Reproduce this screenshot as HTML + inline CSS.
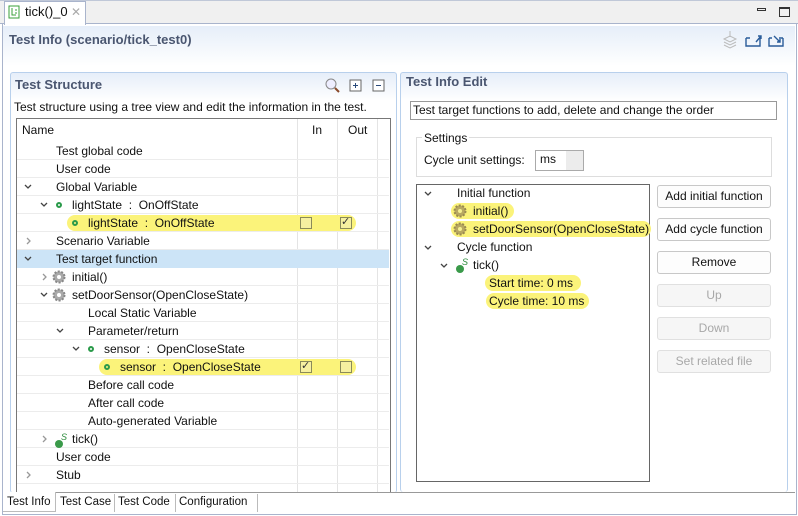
<!DOCTYPE html>
<html><head><meta charset="utf-8"><style>
*{margin:0;padding:0;box-sizing:border-box}
body{width:798px;height:516px;overflow:hidden;background:#fff;font-family:"Liberation Sans",sans-serif;font-size:12px;color:#111;position:relative}
.a{position:absolute}
.t{position:absolute;white-space:nowrap;line-height:18px}
.row{position:absolute;left:17px;width:372px;height:18px;border-bottom:1px solid #ececec}
.hl{position:absolute;background:#fbf37a;border-radius:9px;height:16px}
.cb{position:absolute;width:12px;height:12px;border:1px solid #8a8a5a;background:#f6f0a0}
.btn{position:absolute;left:657px;width:114px;height:23px;border:1px solid #c8c8c8;border-radius:3px;background:#fdfdfd;text-align:center;line-height:21px}
.dis{color:#a8a8a8;background:#f6f6f6;border-color:#e0e0e0}
.gear{position:absolute;width:14px;height:14px}
.dot{position:absolute;width:6px;height:6px;border:2px solid #2a9a4a;border-radius:50%}
</style></head><body>
<div class="a" style="left:0;top:0;width:798px;height:24px;background:#f0f0f0;border-bottom:1px solid #a9b4cc;border-top:1px solid #c0c8d8"></div>
<div class="a" style="left:4px;top:1px;width:82px;height:24px;background:#fff;border:1px solid #a9b4cc;border-bottom:none"></div>
<svg class="a" style="left:8px;top:5px" width="12" height="14"><rect x="1" y="1" width="10" height="12" fill="none" stroke="#3aa03a"/><path d="M4 3v7h4M7 5h2M7 8h2" stroke="#3aa03a" fill="none"/></svg>
<div class="t" style="left:25px;top:3px;font-size:13px">tick()_0</div>
<div class="t" style="left:71px;top:3px;color:#aaa;font-size:12px">✕</div>
<div class="a" style="left:757px;top:8px;width:9px;height:3px;border:1px solid #333"></div>
<div class="a" style="left:779px;top:7px;width:11px;height:10px;border:1px solid #333;border-top-width:2px"></div>
<div class="a" style="left:2px;top:24px;width:795px;height:491px;border:1px solid #a9b4cc;border-top:none"></div>
<div class="a" style="left:3px;top:26px;width:792px;height:40px;background:linear-gradient(#e6eef9,#fff)"></div>
<div class="t" style="left:9px;top:31px;font-size:13px;font-weight:bold;color:#4a5670">Test Info (scenario/tick_test0)</div>
<svg class="a" style="left:722px;top:30px" width="70" height="20"><g stroke="#bbb" fill="none"><path d="M2 9l6-3 6 3-6 3z M2 12l6 3 6-3 M2 15l6 3 6-3 M8 1v6"/></g><g stroke="#2a5c9a" fill="none" stroke-width="1.4"><path d="M24 8v8h14v-8M28 8h-4M34 12l5-6M36 6h3v3"/><path d="M47 8v8h14v-8M47 8h3M52 6l6 6M58 9v3h-3M57 8h4"/></g></svg>
<div class="a" style="left:10px;top:72px;width:387px;height:421px;border:1px solid #b8d0ec;border-radius:3px;border-bottom:none;background:linear-gradient(#e6eef9,#fff 28px)"></div>
<div class="t" style="left:15px;top:76px;font-size:13px;font-weight:bold;color:#4a5670">Test Structure</div>
<svg class="a" style="left:324px;top:77px" width="66" height="18"><circle cx="7" cy="7" r="5" fill="#eef" stroke="#888"/><path d="M11 11l4 4" stroke="#8a4a2a" stroke-width="2"/><rect x="26" y="3" width="11" height="11" fill="#fff" stroke="#666"/><path d="M29 8.5h5M31.5 6v5" stroke="#2a4a7a"/><rect x="49" y="3" width="11" height="11" fill="#fff" stroke="#666"/><path d="M52 8.5h5" stroke="#2a4a7a"/></svg>
<div class="t" style="left:14px;top:98px">Test structure using a tree view and edit the information in the test.</div>
<div class="a" style="left:16px;top:118px;width:375px;height:375px;border:1px solid #777;background:#fff"></div>
<div class="a" style="left:297px;top:119px;width:1px;height:373px;background:#e4e4e4"></div>
<div class="a" style="left:337px;top:119px;width:1px;height:373px;background:#e4e4e4"></div>
<div class="a" style="left:377px;top:119px;width:1px;height:373px;background:#e4e4e4"></div>
<div class="t" style="left:22px;top:121px">Name</div>
<div class="t" style="left:312px;top:121px">In</div>
<div class="t" style="left:348px;top:121px">Out</div>
<div class="row" style="top:142px"></div><div class="row" style="top:160px"></div><div class="row" style="top:178px"></div><div class="row" style="top:196px"></div><div class="row" style="top:214px"></div><div class="row" style="top:232px"></div>
<div class="row" style="top:250px;background:#cce4f7;border-color:#cce4f7"></div>
<div class="row" style="top:268px"></div><div class="row" style="top:286px"></div><div class="row" style="top:304px"></div><div class="row" style="top:322px"></div><div class="row" style="top:340px"></div><div class="row" style="top:358px"></div><div class="row" style="top:376px"></div><div class="row" style="top:394px"></div><div class="row" style="top:412px"></div><div class="row" style="top:430px"></div><div class="row" style="top:448px"></div><div class="row" style="top:466px"></div>
<div class="hl" style="left:67px;top:215px;width:289px"></div>
<div class="hl" style="left:99px;top:359px;width:257px"></div>
<svg class="a" style="left:0;top:0" width="400" height="516"><g fill="none" stroke="#444" stroke-width="1.3">
<path d="M25 185l3 3 3-3M41 203l3 3 3-3M25 257l3 3 3-3M41 293l3 3 3-3M57 329l3 3 3-3M73 347l3 3 3-3"/></g>
<g fill="none" stroke="#999" stroke-width="1.3"><path d="M27 238l3 3-3 3M43 274l3 3-3 3M43 436l3 3-3 3M27 472l3 3-3 3"/></g></svg>
<div class="dot" style="left:56px;top:202px"></div><div class="dot" style="left:72px;top:220px"></div>
<div class="dot" style="left:88px;top:346px"></div><div class="dot" style="left:104px;top:364px"></div>
<svg class="gear" style="left:52px;top:270px" viewBox="0 0 14 14"><circle cx="7" cy="7" r="5.5" fill="#aaa" stroke="#888" stroke-width="2" stroke-dasharray="2 1.5"/><circle cx="7" cy="7" r="2" fill="#fff"/></svg>
<svg class="gear" style="left:52px;top:288px" viewBox="0 0 14 14"><circle cx="7" cy="7" r="5.5" fill="#aaa" stroke="#888" stroke-width="2" stroke-dasharray="2 1.5"/><circle cx="7" cy="7" r="2" fill="#fff"/></svg>
<div class="a" style="left:55px;top:440px;width:8px;height:8px;border-radius:50%;background:#3a9a4a"></div><div class="t" style="left:61px;top:428px;font-size:9px;font-style:italic;color:#2a8a3a">S</div>
<div class="t" style="left:56px;top:142px">Test global code</div>
<div class="t" style="left:56px;top:160px">User code</div>
<div class="t" style="left:56px;top:178px">Global Variable</div>
<div class="t" style="left:72px;top:196px">lightState &nbsp;: &nbsp;OnOffState</div>
<div class="t" style="left:88px;top:214px">lightState &nbsp;: &nbsp;OnOffState</div>
<div class="cb" style="left:300px;top:217px"></div>
<div class="cb" style="left:340px;top:217px"></div>
<div class="t" style="left:341px;top:213px;font-size:11px;color:#333">✓</div>
<div class="t" style="left:56px;top:232px">Scenario Variable</div>
<div class="t" style="left:56px;top:250px">Test target function</div>
<div class="t" style="left:72px;top:268px">initial()</div>
<div class="t" style="left:72px;top:286px">setDoorSensor(OpenCloseState)</div>
<div class="t" style="left:88px;top:304px">Local Static Variable</div>
<div class="t" style="left:88px;top:322px">Parameter/return</div>
<div class="t" style="left:104px;top:340px">sensor &nbsp;: &nbsp;OpenCloseState</div>
<div class="t" style="left:120px;top:358px">sensor &nbsp;: &nbsp;OpenCloseState</div>
<div class="cb" style="left:300px;top:361px"></div>
<div class="t" style="left:301px;top:357px;font-size:11px;color:#333">✓</div>
<div class="cb" style="left:340px;top:361px"></div>
<div class="t" style="left:88px;top:376px">Before call code</div>
<div class="t" style="left:88px;top:394px">After call code</div>
<div class="t" style="left:88px;top:412px">Auto-generated Variable</div>
<div class="t" style="left:72px;top:430px">tick()</div>
<div class="t" style="left:56px;top:448px">User code</div>
<div class="t" style="left:56px;top:466px">Stub</div>
<div class="a" style="left:400px;top:72px;width:388px;height:420px;border:1px solid #b8d0ec;border-radius:3px;border-bottom:none;background:linear-gradient(#e6eef9,#fff 28px)"></div>
<div class="t" style="left:406px;top:73px;font-size:13px;font-weight:bold;color:#4a5670">Test Info Edit</div>
<div class="a" style="left:410px;top:101px;width:367px;height:19px;border:1px solid #999"></div>
<div class="t" style="left:413px;top:101px">Test target functions to add, delete and change the order</div>
<div class="a" style="left:416px;top:137px;width:356px;height:40px;border:1px solid #ddd"></div>
<div class="t" style="left:422px;top:129px;background:#fff;padding:0 2px">Settings</div>
<div class="t" style="left:424px;top:151px">Cycle unit settings:</div>
<div class="a" style="left:535px;top:150px;width:49px;height:21px;border:1px solid #aaa;background:#fff"></div>
<div class="a" style="left:566px;top:151px;width:17px;height:19px;background:#ececec"></div>
<div class="t" style="left:540px;top:150px">ms</div>
<div class="a" style="left:416px;top:184px;width:234px;height:298px;border:1px solid #666;background:#fff"></div>
<div class="hl" style="left:451px;top:203px;width:63px"></div>
<div class="hl" style="left:451px;top:221px;width:200px"></div>
<div class="hl" style="left:485px;top:275px;width:96px"></div>
<div class="hl" style="left:486px;top:293px;width:103px"></div>
<svg class="a" style="left:400px;top:180px" width="60" height="100"><g fill="none" stroke="#444" stroke-width="1.3"><path d="M25 12l3 3 3-3M25 66l3 3 3-3M41 84l3 3 3-3"/></g></svg>
<svg class="gear" style="left:453px;top:204px" viewBox="0 0 14 14"><circle cx="7" cy="7" r="5.5" fill="#b8a860" stroke="#9a8a50" stroke-width="2" stroke-dasharray="2 1.5"/><circle cx="7" cy="7" r="2" fill="#f5ef90"/></svg>
<svg class="gear" style="left:453px;top:222px" viewBox="0 0 14 14"><circle cx="7" cy="7" r="5.5" fill="#b8a860" stroke="#9a8a50" stroke-width="2" stroke-dasharray="2 1.5"/><circle cx="7" cy="7" r="2" fill="#f5ef90"/></svg>
<div class="a" style="left:456px;top:265px;width:8px;height:8px;border-radius:50%;background:#3a9a4a"></div><div class="t" style="left:462px;top:253px;font-size:9px;font-style:italic;color:#2a8a3a">S</div>
<div class="t" style="left:457px;top:184px">Initial function</div>
<div class="t" style="left:473px;top:202px">initial()</div>
<div class="t" style="left:473px;top:220px">setDoorSensor(OpenCloseState)</div>
<div class="t" style="left:457px;top:238px">Cycle function</div>
<div class="t" style="left:473px;top:256px">tick()</div>
<div class="t" style="left:489px;top:274px">Start time: 0 ms</div>
<div class="t" style="left:489px;top:292px">Cycle time: 10 ms</div>
<div class="btn" style="top:185px">Add initial function</div>
<div class="btn" style="top:218px">Add cycle function</div>
<div class="btn" style="top:251px">Remove</div>
<div class="btn dis" style="top:284px">Up</div>
<div class="btn dis" style="top:317px">Down</div>
<div class="btn dis" style="top:350px">Set related file</div>
<div class="a" style="left:3px;top:492px;width:792px;height:1px;background:#999"></div>
<div class="a" style="left:3px;top:492px;width:53px;height:20px;background:#fff;border-right:1px solid #bbb;border-bottom:1px solid #bbb"></div>
<div class="t" style="left:7px;top:493px;font-size:11.5px">Test Info</div>
<div class="a" style="left:114px;top:494px;width:1px;height:18px;background:#bbb"></div>
<div class="a" style="left:175px;top:494px;width:1px;height:18px;background:#bbb"></div>
<div class="a" style="left:257px;top:494px;width:1px;height:18px;background:#bbb"></div>
<div class="t" style="left:60px;top:493px;font-size:11.5px">Test Case</div>
<div class="t" style="left:118px;top:493px;font-size:11.5px">Test Code</div>
<div class="t" style="left:179px;top:493px;font-size:11.5px">Configuration</div>
</body></html>
